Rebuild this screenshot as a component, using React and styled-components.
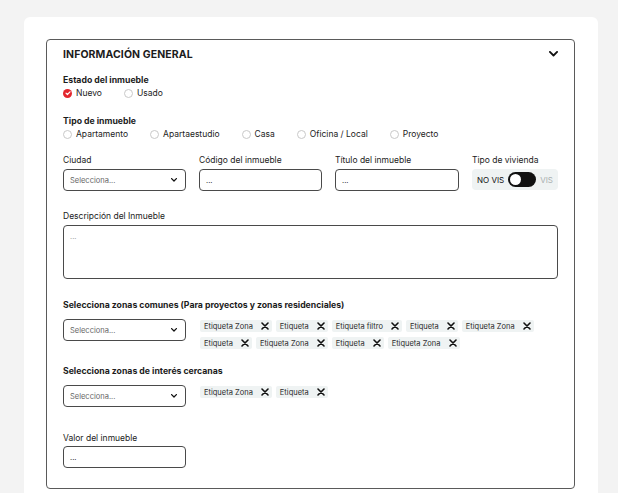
import React from 'react';
import styled, { createGlobalStyle } from 'styled-components';

const GlobalStyle = createGlobalStyle`
  html, body { margin: 0; padding: 0; background: #f3f3f3; }
  body { font-family: Inter, "Noto Sans", sans-serif; color: #1c1c1c; }
  * { box-sizing: border-box; }
`;

const Page = styled.div`
  padding: 17px 0 0 24px;
  height: 493px;
  overflow: hidden;
`;

const Card = styled.div`
  width: 574px;
  min-height: 520px;
  background: #fff;
  border-radius: 6px;
  padding: 22px 23px 0 22px;
`;

const Box = styled.section`
  border: 1px solid #5a5a5a;
  border-radius: 4px;
  padding: 6px 16px 20px 16px;
`;

const Header = styled.div`
  display: flex;
  justify-content: space-between;
  align-items: center;
  height: 16px;
`;

const Title = styled.h2`
  margin: 0;
  font-size: 10.5px;
  font-weight: 700;
  letter-spacing: 0.1px;
`;

const Heading = styled.div`
  font-size: 8.7px;
  font-weight: 700;
  line-height: 12px;
  margin-top: ${p => p.$mt || 0}px;
`;

const Label = styled.div`
  font-size: 8.5px;
  line-height: 12px;
  color: #222;
  margin-top: ${p => p.$mt || 0}px;
`;

const RadioRow = styled.div`
  display: flex;
  gap: 22px;
  margin-top: 2px;
  height: 10px;
  align-items: center;
`;

const RadioItem = styled.label`
  display: flex;
  align-items: center;
  gap: 4px;
  font-size: 8.5px;
  color: #222;
`;

const RadioCircle = styled.span`
  width: 9px;
  height: 9px;
  border-radius: 50%;
  border: ${p => (p.$checked ? 'none' : '1px solid #c9c9c9')};
  background: ${p => (p.$checked ? '#e3262d' : '#fff')};
  display: flex;
  align-items: center;
  justify-content: center;
`;

const FieldsGrid = styled.div`
  display: grid;
  grid-template-columns: 123px 123px 124px 86px;
  column-gap: 13px;
  margin-top: 15px;
`;

const Field = styled.div`
  display: flex;
  flex-direction: column;
  gap: 3px;
  margin-top: ${p => p.$mt || 0}px;
`;

const InputBox = styled.div`
  height: 22px;
  width: ${p => p.$w || '100%'};
  border: 1px solid #4a4a4a;
  border-radius: 4px;
  display: flex;
  align-items: center;
  justify-content: space-between;
  padding: 0 8px 0 6px;
  font-size: 7.5px;
  color: ${p => (p.$placeholder ? '#666' : '#222')};
  flex-shrink: 0;
`;

const TextArea = styled.div`
  height: 54px;
  margin-top: 3px;
  border: 1px solid #4a4a4a;
  border-radius: 4px;
  padding: 6px 6px;
  font-size: 7.5px;
  color: #999;
  line-height: 10px;
`;

const Toggle = styled.div`
  height: 21px;
  background: #eff3f3;
  border-radius: 4px;
  display: flex;
  align-items: center;
  gap: 4px;
  padding: 0 5px;
  font-size: 8px;
`;

const Switch = styled.span`
  width: 28px;
  height: 15px;
  border-radius: 8px;
  background: #111;
  position: relative;
  &::after {
    content: '';
    position: absolute;
    left: 2px;
    top: 2px;
    width: 11px;
    height: 11px;
    border-radius: 50%;
    background: #fff;
  }
`;

const ToggleText = styled.span`
  color: ${p => (p.$muted ? '#aab0b0' : '#111')};
`;

const SelectRow = styled.div`
  display: flex;
  gap: 14px;
  margin-top: 8px;
  align-items: flex-start;
`;

const Tags = styled.div`
  display: flex;
  flex-wrap: wrap;
  gap: 5px 4px;
  width: 345px;
  padding-top: 1px;
`;

const Tag = styled.span`
  display: inline-flex;
  align-items: center;
  height: 12px;
  background: #eff3f3;
  border-radius: 2px;
  padding: 0 3px 0 4px;
  gap: 8px;
  font-size: 7.5px;
  color: #2a2a2a;
`;

const Chevron = ({ size = 7, stroke = 1.4 }) => (
  <svg width={size} height={size * 0.65} viewBox="0 0 10 6.5" fill="none">
    <path d="M1 1l4 4 4-4" stroke="#111" strokeWidth={stroke * (10 / size)} strokeLinecap="round" strokeLinejoin="round" />
  </svg>
);

const Cross = () => (
  <svg width="8" height="8" viewBox="0 0 8 8">
    <path d="M1 1l6 6M7 1L1 7" stroke="#111" strokeWidth="1.6" strokeLinecap="round" />
  </svg>
);

const Radio = ({ checked, children }) => (
  <RadioItem>
    <RadioCircle $checked={checked}>
      {checked && (
        <svg width="6" height="6" viewBox="0 0 6 6">
          <path d="M1 3.1l1.4 1.4L5 1.8" stroke="#fff" strokeWidth="1.2" fill="none" strokeLinecap="round" strokeLinejoin="round" />
        </svg>
      )}
    </RadioCircle>
    {children}
  </RadioItem>
);

const Select = () => (
  <InputBox $w="123px" $placeholder>
    Selecciona...
    <Chevron size={6} stroke={1.3} />
  </InputBox>
);

const TagList = ({ items }) => (
  <Tags>
    {items.map((t, i) => (
      <Tag key={i}>
        {t}
        <Cross />
      </Tag>
    ))}
  </Tags>
);

const comunes = [
  'Etiqueta Zona', 'Etiqueta', 'Etiqueta filtro', 'Etiqueta', 'Etiqueta Zona',
  'Etiqueta', 'Etiqueta Zona', 'Etiqueta', 'Etiqueta Zona',
];

const App = () => (
  <>
    <GlobalStyle />
    <Page>
      <Card>
        <Box>
          <Header>
            <Title>INFORMACIÓN GENERAL</Title>
            <Chevron size={9} stroke={1.8} />
          </Header>

          <Heading $mt={12}>Estado del inmueble</Heading>
          <RadioRow>
            <Radio checked>Nuevo</Radio>
            <Radio>Usado</Radio>
          </RadioRow>

          <Heading $mt={17}>Tipo de inmueble</Heading>
          <RadioRow>
            <Radio>Apartamento</Radio>
            <Radio>Apartaestudio</Radio>
            <Radio>Casa</Radio>
            <Radio>Oficina / Local</Radio>
            <Radio>Proyecto</Radio>
          </RadioRow>

          <FieldsGrid>
            <Field>
              <Label>Ciudad</Label>
              <Select />
            </Field>
            <Field>
              <Label>Código del inmueble</Label>
              <InputBox>...</InputBox>
            </Field>
            <Field>
              <Label>Título del inmueble</Label>
              <InputBox>...</InputBox>
            </Field>
            <Field>
              <Label>Tipo de vivienda</Label>
              <Toggle>
                <ToggleText>NO VIS</ToggleText>
                <Switch />
                <ToggleText $muted>VIS</ToggleText>
              </Toggle>
            </Field>
          </FieldsGrid>

          <Label $mt={19}>Descripción del Inmueble</Label>
          <TextArea>...</TextArea>

          <Heading $mt={20}>Selecciona zonas comunes (Para proyectos y zonas residenciales)</Heading>
          <SelectRow>
            <Select />
            <TagList items={comunes} />
          </SelectRow>

          <Heading $mt={16}>Selecciona zonas de interés cercanas</Heading>
          <SelectRow>
            <Select />
            <TagList items={['Etiqueta Zona', 'Etiqueta']} />
          </SelectRow>

          <Label $mt={25}>Valor del inmueble</Label>
          <Field $mt={2}>
            <InputBox $w="123px">...</InputBox>
          </Field>
        </Box>
      </Card>
    </Page>
  </>
);

export default App;
